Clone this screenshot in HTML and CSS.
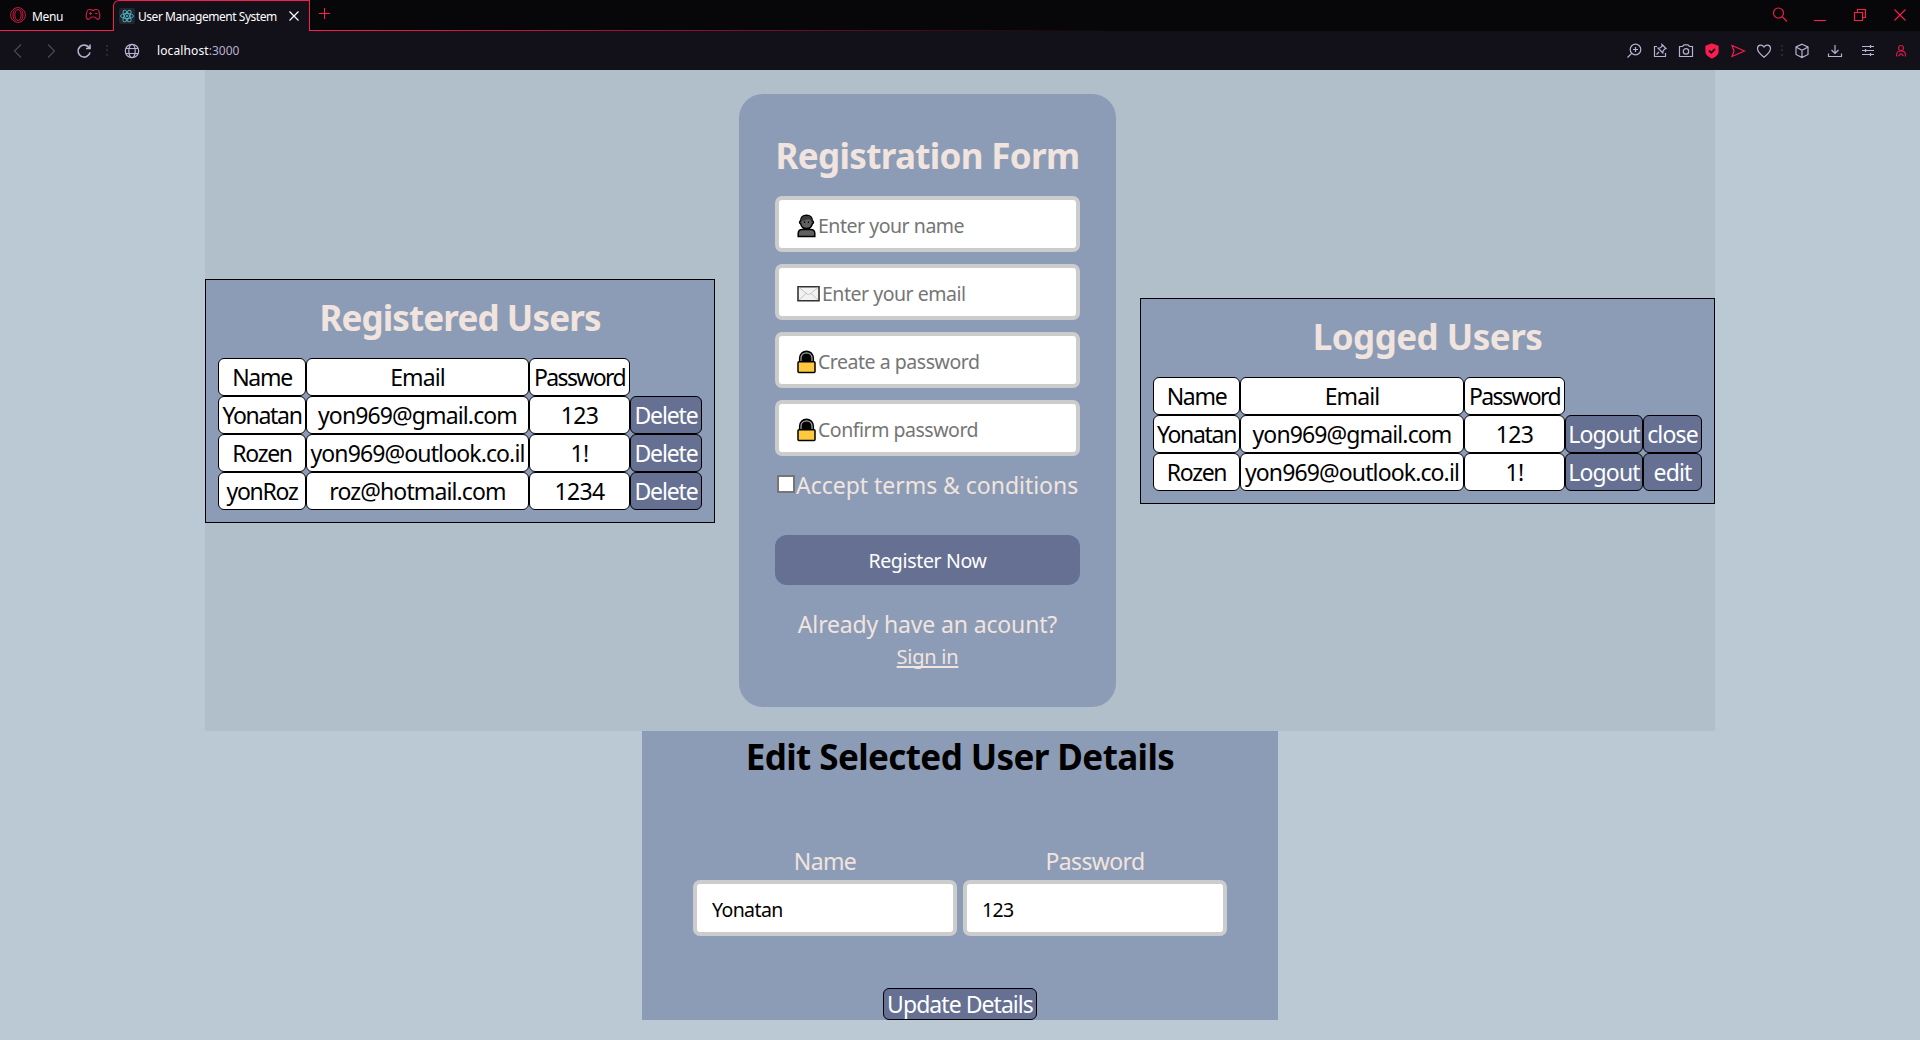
FILE: index.html
```html
<!DOCTYPE html>
<html lang="en">
<head>
<meta charset="utf-8">
<title>User Management System</title>
<link rel="stylesheet" href="styles.css">
</head>
<body>
<header class="browser">
  <div class="tabstrip">
    <div class="menu">
      <svg class="i16 red" viewBox="0 0 16 16"><circle cx="8" cy="8" r="7.400"/><ellipse cx="8" cy="8" rx="3.200" ry="5.500"/><path d="M10.500 2.200c3.200 2.300 3.200 9.300 0 11.600M5.500 2.200c-3.200 2.300-3.200 9.300 0 11.600"/></svg>
      <span class="menu-text">Menu</span>
      <svg class="i16 red pad" viewBox="0 0 16 16"><path d="M4 2.500h2.200l1 .8h1.600l1-.8H12c1.600 0 2.500 2 2.800 6.200.1 2.300-.9 3.600-2.100 3.600-1.600 0-1.900-2.300-3.500-2.300H6.800c-1.600 0-1.900 2.300-3.500 2.300-1.200 0-2.200-1.300-2.100-3.600C1.500 4.500 2.400 2.500 4 2.500zM5.500 5v3M4 6.500h3M10 6.500h2.500"/></svg>
    </div>
    <div class="tab">
      <span class="favicon"><svg viewBox="0 0 16 16"><g class="atom"><ellipse cx="8" cy="8" rx="6.500" ry="2.500"/><ellipse cx="8" cy="8" rx="6.500" ry="2.500" transform="rotate(60 8 8)"/><ellipse cx="8" cy="8" rx="6.500" ry="2.500" transform="rotate(120 8 8)"/><circle cx="8" cy="8" r=".8"/></g></svg></span>
      <span class="tab-title">User Management System</span>
      <svg class="tab-close" viewBox="0 0 10 10"><path d="M.5.5l9 9M9.500.5l-9 9"/></svg>
    </div>
    <div class="rest">
      <svg class="plus" viewBox="0 0 11 11"><path d="M5.500 0v11M0 5.500h11"/></svg>
      <div class="window">
        <svg class="i16 red" viewBox="0 0 16 16"><circle cx="6.500" cy="6" r="5"/><path d="M10.200 9.700L15 14.500"/></svg>
        <svg class="i16 red" viewBox="0 0 16 16"><path d="M2 13.500h12"/></svg>
        <svg class="i16 red" viewBox="0 0 16 16"><path d="M2.500 5.500h8v8h-8zM5.500 5.500v-3h8v8h-3"/></svg>
        <svg class="i16 red" viewBox="0 0 16 16"><path d="M2.500 2.500l11 11M13.500 2.500l-11 11"/></svg>
      </div>
    </div>
  </div>
  <div class="toolbar">
    <div class="nav">
      <svg class="i16 dim" viewBox="0 0 16 16"><path d="M11 1.500L4.500 8l6.500 6.500"/></svg>
      <svg class="i16 dim" viewBox="0 0 16 16"><path d="M5 1.500L11.500 8 5 14.500"/></svg>
      <svg class="i16 reload" viewBox="0 0 16 16"><path d="M13.300 5A6 6 0 1 0 14 9.300M14 1.500V5.500h-4"/></svg>
    </div>
    <span class="dots"></span>
    <svg class="i16 globe" viewBox="0 0 16 16"><circle cx="8" cy="8" r="6.700"/><ellipse cx="8" cy="8" rx="3.200" ry="6.700"/><path d="M2 5.500h12M2 10.500h12"/></svg>
    <span class="url"><span class="host">localhost</span><span class="port">:3000</span></span>
    <div class="actions">
      <svg class="i16" viewBox="0 0 16 16"><circle cx="9.500" cy="6.500" r="5.300"/><path d="M5.700 10.300L1.500 14.500M7 6.500h5M9.500 4v5"/></svg>
      <svg class="i16" viewBox="0 0 16 16"><path d="M5 3.500H2.500v10h11V10M4.500 11.500L7 9M10 1.500L14 5.500 12.800 6l-1.600 1.600-.4 2.400L6 5.200l2.400-.4L10 3.200z"/></svg>
      <svg class="i16" viewBox="0 0 16 16"><path d="M1.500 3.500h3L6 1.800h4l1.500 1.700h3v10h-13z"/><circle cx="8" cy="8.400" r="2.700"/></svg>
      <svg class="i16" viewBox="0 0 16 16"><path class="shield" d="M8 1l6 2.200V9c0 3-3 4.500-6 6-3-1.500-6-3-6-6V3.200z"/><path class="tick" d="M5 7.500l2.300 2.300L11 6"/></svg>
      <svg class="i16 red" viewBox="0 0 16 16"><path d="M2 2.500L14.500 8 2 13.500 4 8z"/></svg>
      <svg class="i16" viewBox="0 0 16 16"><path d="M8 14.200C4.500 11.500 1.500 9 1.500 5.500 1.500 1.800 6 .8 8 4c2-3.200 6.500-2.200 6.500 1.500C14.500 9 11.500 11.500 8 14.200z"/></svg>
    </div>
    <span class="dots"></span>
    <div class="sidebar-actions">
      <svg class="i16" viewBox="0 0 16 16"><path d="M8 1.200l6 2.800v7.500l-6 3-6-3V4zM2 4l6 3.200L14 4M8 7.200v7.300"/></svg>
      <svg class="i16" viewBox="0 0 16 16"><path d="M8 2v8.500M4.500 7L8 10.500 11.500 7M1.500 10.500v3h13v-3"/></svg>
      <svg class="i16" viewBox="0 0 16 16"><path d="M2 3.500h12M2 7.500h12M2 11.500h12M10.500 2v3M5.500 6v3M10.500 10v3"/></svg>
      <svg class="i16 account" viewBox="0 0 16 16"><circle cx="8" cy="5" r="2.500"/><path d="M3.500 13.500v-1.500c0-5.500 9-5.500 9 0v1.500M5.500 13L8 10.500l2.500 2.500"/></svg>
    </div>
  </div>
</header>

<main class="page">
  <section class="columns">
    <div class="panel">
      <h2 class="registered">Registered Users</h2>
      <div class="table users">
        <div class="cell short">Name</div><div class="cell">Email</div><div class="cell pw">Password</div><div></div>
        <div class="cell short">Yonatan</div><div class="cell">yon969@gmail.com</div><div class="cell num">123</div><button class="cell action delete">Delete</button>
        <div class="cell short">Rozen</div><div class="cell">yon969@outlook.co.il</div><div class="cell num">1!</div><button class="cell action delete">Delete</button>
        <div class="cell short">yonRoz</div><div class="cell">roz@hotmail.com</div><div class="cell num">1234</div><button class="cell action delete">Delete</button>
      </div>
    </div>

    <form class="card">
      <h2>Registration Form</h2>
      <div class="fields">
        <label class="field">
          <svg class="glyph" viewBox="0 0 19 24"><path class="person" d="M1.200 22.500v-3q0-4 4-4h8.600q4 0 4 4v3zM9.500 1.200C5.500 1.200 3.700 4 3.700 7c-1.500 0-1.500 2.600 0 2.800.6 3 3 4.700 5.800 4.700s5.200-1.700 5.800-4.700c1.500-.2 1.500-2.800 0-2.800 0-3-1.800-5.800-5.800-5.800z"/><path class="hair" d="M4.400 6.500C4.400 3 6 2 9.500 2S14.600 3 14.600 6.500l-3.600-1.500-3.500 1.500z"/><path class="eyes" d="M7.500 7.500v1.500M11.500 7.500v1.500"/></svg>
          <input placeholder="Enter your name">
        </label>
        <label class="field">
          <svg class="glyph wide" viewBox="0 0 23 24"><path class="mail" d="M1 4.800h21v14H1z"/><path class="flap" d="M2 5.500l8 6.500q1.500 1 3 0l8-6.500M2 18l7-6.500M21 18l-7-6.500"/></svg>
          <input placeholder="Enter your email">
        </label>
        <label class="field">
          <svg class="glyph" viewBox="0 0 19 24"><path class="hole" d="M2.500 13V8.500C2.500-1.300 16.500-1.300 16.500 8.500V13z"/><path class="shackle" d="M4 12V8.500c0-7.500 11-7.500 11 0V12"/><rect class="lock" x="1" y="11.800" width="17" height="10.700" rx="1"/></svg>
          <input placeholder="Create a password">
        </label>
        <label class="field">
          <svg class="glyph" viewBox="0 0 19 24"><path class="hole" d="M2.500 13V8.500C2.500-1.300 16.500-1.300 16.500 8.500V13z"/><path class="shackle" d="M4 12V8.500c0-7.500 11-7.500 11 0V12"/><rect class="lock" x="1" y="11.800" width="17" height="10.700" rx="1"/></svg>
          <input placeholder="Confirm password">
        </label>
      </div>
      <label class="terms"><input type="checkbox"><span>Accept terms &amp; conditions</span></label>
      <button type="button" class="register">Register Now</button>
      <p class="already">Already have an acount?</p>
      <a class="signin">Sign in</a>
    </form>

    <div class="panel">
      <h2 class="logged">Logged Users</h2>
      <div class="table sessions">
        <div class="cell short">Name</div><div class="cell">Email</div><div class="cell pw">Password</div><div></div><div></div>
        <div class="cell short">Yonatan</div><div class="cell">yon969@gmail.com</div><div class="cell num">123</div><button class="cell action">Logout</button><button class="cell action">close</button>
        <div class="cell short">Rozen</div><div class="cell">yon969@outlook.co.il</div><div class="cell num">1!</div><button class="cell action">Logout</button><button class="cell action">edit</button>
      </div>
    </div>
  </section>

  <section class="edit">
    <h2>Edit Selected User Details</h2>
    <div class="edit-fields">
      <label>Name<input value="Yonatan"></label>
      <label>Password<input value="123"></label>
    </div>
    <button class="update">Update Details</button>
  </section>
</main>
</body>
</html>
```
FILE: styles.css
```css
* { box-sizing: border-box; }
body {
  margin: 0;
  height: 1040px;
  overflow: hidden;
  background: #bbc9d5;
  font-family: "Noto Sans", "Open Sans", sans-serif;
  font-size: 23px;
  color: #000;
}
button, input { font: inherit; letter-spacing: inherit; margin: 0; }
svg { display: block; flex: none; fill: none; stroke: #b8b1d0; stroke-width: 1.2; }

/* browser chrome */
.browser { height: 70px; background: #121019; font-size: 12px; color: #fff; }
.tabstrip { display: flex; height: 31px; background: #070709; }
.i16 { width: 16px; height: 16px; }
.red { stroke: #fa1e4e; }
.dim { stroke: #4c4858; }
.reload { stroke-width: 1.6; }
.menu { display: flex; align-items: center; width: 113px; padding-left: 10px; border-bottom: 1px solid #fa1e4e; }
.menu .red { stroke: #c81b42; stroke-width: 1; }
.menu-text { margin-left: 6px; width: 30px; padding-top: 2px; letter-spacing: -.35px; }
.menu .pad { margin-left: 23px; stroke-width: 1.2; }
.tab {
  display: flex;
  align-items: center;
  width: 197px;
  padding-left: 5px;
  background: #121019;
  border: solid #fa1e4e;
  border-width: 1px 1px 0;
  border-top-left-radius: 6px;
}
.favicon { width: 16px; height: 16px; background: #23272b; border-radius: 2px; }
.atom { stroke: #4fb3cf; stroke-width: .9; }
.tab-title { width: 138px; margin-left: 3px; white-space: nowrap; letter-spacing: -.46px; }
.tab-close { width: 10px; height: 10px; margin-left: 13px; stroke: #fff; }
.rest {
  display: flex;
  flex: 1;
  justify-content: space-between;
  padding: 7px 12px 0 9px;
  background: linear-gradient(90deg, #fa1e4e, transparent 50%) bottom / 100% 1px no-repeat;
}
.plus { width: 11px; height: 11px; margin-top: 1px; stroke: #fa1e4e; stroke-width: 1; }
.window { display: flex; gap: 24px; }
.window svg { stroke-width: 1.1; }
.toolbar { display: flex; align-items: center; height: 39px; padding: 0 11px 0 10px; }
.nav { display: flex; gap: 17px; width: 96px; }
.dots { width: 2px; height: 11px; background: repeating-linear-gradient(#2a2739 0 2px, transparent 2px 4.500px); }
.globe { margin-left: 16px; }
.url { margin: 0 auto 0 17px; }
.host { letter-spacing: .12px; }
.port { color: #b8b1d0; }
.actions { display: flex; gap: 10px; margin-right: 9px; }
.sidebar-actions { display: flex; gap: 17px; margin-left: 11px; }
.account { stroke: #d11b43; }
.shield { fill: #fa1e4e; stroke: #fa1e4e; }
.tick { stroke: #121019; stroke-width: 1.8; }

/* page */
.page { display: flex; flex-direction: column; align-items: center; }
.columns { display: flex; align-items: center; gap: 24px; height: 661px; background: #b0bfca; }
h2 {
  margin: 0 0 15px;
  padding-top: 1px;
  font-size: 35px;
  font-weight: 700;
  line-height: 50px;
  letter-spacing: -.88px;
  text-align: center;
  white-space: nowrap;
  color: #f1e4de;
}
.logged { letter-spacing: -.52px; }
.panel { padding: 12px; border: 1px solid #000; background: #8c9cb6; }
.table { display: grid; grid-auto-rows: 38px; }
.users { grid-template-columns: 88px 223px 101px 72px; }
.sessions { grid-template-columns: 87px 224px 101px 78px 59px; }
.cell {
  padding: 0;
  border: 1px solid #000;
  border-radius: 6px;
  background: #fff;
  line-height: 36px;
  letter-spacing: -.88px;
  text-align: center;
  white-space: nowrap;
}
.short { letter-spacing: -1.3px; }
.pw { letter-spacing: -1.6px; }
.num { letter-spacing: -.6px; }
.action { background: #657092; color: #fff; letter-spacing: -.85px; }
.delete { letter-spacing: -1.15px; }

.card { width: 377px; height: 613px; padding: 36px; border-radius: 24px; background: #8c9cb6; color: #f1e4de; text-align: center; }
.card h2 { letter-spacing: -.67px; }
.fields { display: grid; gap: 12px; }
.field {
  display: flex;
  align-items: center;
  height: 56px;
  padding: 3px 16px 0 18px;
  border: 4px solid #ccc;
  border-radius: 7px;
  background: #fff;
}
.glyph { width: 19px; height: 24px; margin-right: 2px; stroke: #000; }
.wide { width: 23px; }
.field input { width: 230px; padding: 0; border: 0; outline: 0; background: none; font-size: 19.500px; letter-spacing: -.47px; }
.field input::placeholder { color: #757575; opacity: 1; }
.person { fill: #606060; stroke-width: 1.5; }
.hair { fill: #3a3a3a; stroke: none; }
.mail { fill: #f2f2f2; stroke: #333; stroke-width: 1.6; }
.flap { stroke: #c4c4c4; stroke-width: 1; }
.hole { fill: #000; }
.shackle { stroke: #aaa; stroke-width: 1.2; }
.lock { fill: #ffc83d; stroke-width: 1.5; }
.terms { display: flex; align-items: center; height: 34px; margin: 12px 0 33px 2px; white-space: nowrap; line-height: 34px; }
.terms input { appearance: none; width: 18px; height: 18px; margin: 0 1px 3px 0; border: 2px solid #767676; background: #fff; }
.terms span { letter-spacing: -.03px; }
.register { display: block; width: 305px; height: 50px; padding: 0; border: 0; border-radius: 12px; background: #657092; color: #fff; font-size: 19.500px; letter-spacing: -.33px; }
.already { margin: 22px 0 0; line-height: 35px; letter-spacing: -.15px; }
.signin { display: block; font-size: 20px; line-height: 30px; letter-spacing: -.25px; text-decoration: underline; text-underline-offset: 2px; text-decoration-thickness: 2px; text-decoration-skip-ink: none; }

.edit { display: flex; flex-direction: column; align-items: center; width: 636px; height: 289px; background: #8c9cb6; }
.edit h2 { color: #000; margin-bottom: 62px; letter-spacing: -.6px; }
.edit-fields { display: flex; gap: 6px; }
.edit label { display: grid; gap: 2px; line-height: 34px; text-align: center; color: #f1e4de; letter-spacing: -.6px; }
.edit input { width: 264px; height: 56px; padding: 2px 15px 0; border: 4px solid #ccc; border-radius: 7px; background: #fff; color: #000; font-size: 19.500px; letter-spacing: -.6px; }
.update { width: 154px; height: 32px; margin-top: 52px; padding: 0; border: 1px solid #000; border-radius: 6px; background: #657092; color: #fff; line-height: 30px; letter-spacing: -.95px; }
```
